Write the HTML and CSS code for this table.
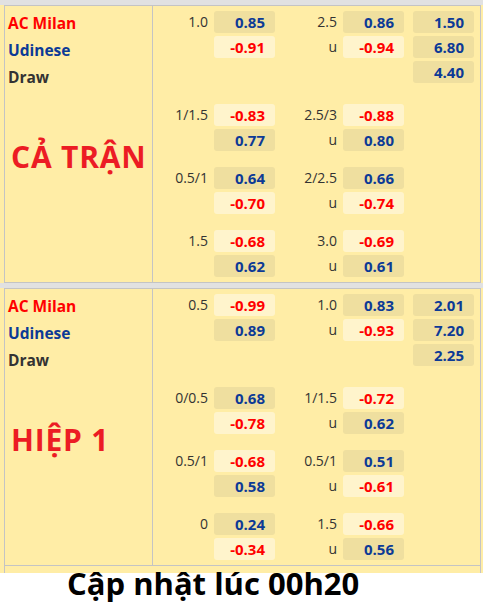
FILE: index.html
```html
<!DOCTYPE html>
<html lang="vi">
<head>
<meta charset="utf-8">
<link rel="stylesheet" href="styles.css">
</head>
<body>
<div class="board">
  <div class="band"></div>
  <section class="block">
    <div class="names">
      <div class="team home">AC Milan</div>
      <div class="team away">Udinese</div>
      <div class="team draw">Draw</div>
      <div class="big">CẢ TRẬN</div>
    </div>
    <div class="odds">
      <div class="group main">
        <div class="row"><div class="lbl">1.0</div><div class="v pos">0.85</div><div class="lbl">2.5</div><div class="v pos">0.86</div><div class="v pos x">1.50</div></div>
        <div class="row"><div class="lbl"></div><div class="v neg">-0.91</div><div class="lbl">u</div><div class="v neg">-0.94</div><div class="v pos x">6.80</div></div>
        <div class="row"><div class="lbl"></div><div></div><div class="lbl"></div><div></div><div class="v pos x">4.40</div></div>
      </div>
      <div class="group">
        <div class="row"><div class="lbl">1/1.5</div><div class="v neg">-0.83</div><div class="lbl">2.5/3</div><div class="v neg">-0.88</div></div>
        <div class="row"><div class="lbl"></div><div class="v pos">0.77</div><div class="lbl">u</div><div class="v pos">0.80</div></div>
      </div>
      <div class="group">
        <div class="row"><div class="lbl">0.5/1</div><div class="v pos">0.64</div><div class="lbl">2/2.5</div><div class="v pos">0.66</div></div>
        <div class="row"><div class="lbl"></div><div class="v neg">-0.70</div><div class="lbl">u</div><div class="v neg">-0.74</div></div>
      </div>
      <div class="group">
        <div class="row"><div class="lbl">1.5</div><div class="v neg">-0.68</div><div class="lbl">3.0</div><div class="v neg">-0.69</div></div>
        <div class="row"><div class="lbl"></div><div class="v pos">0.62</div><div class="lbl">u</div><div class="v pos">0.61</div></div>
      </div>
    </div>
  </section>
  <div class="band"></div>
  <section class="block">
    <div class="names">
      <div class="team home">AC Milan</div>
      <div class="team away">Udinese</div>
      <div class="team draw">Draw</div>
      <div class="big">HIỆP 1</div>
    </div>
    <div class="odds">
      <div class="group main">
        <div class="row"><div class="lbl">0.5</div><div class="v neg">-0.99</div><div class="lbl">1.0</div><div class="v pos">0.83</div><div class="v pos x">2.01</div></div>
        <div class="row"><div class="lbl"></div><div class="v pos">0.89</div><div class="lbl">u</div><div class="v neg">-0.93</div><div class="v pos x">7.20</div></div>
        <div class="row"><div class="lbl"></div><div></div><div class="lbl"></div><div></div><div class="v pos x">2.25</div></div>
      </div>
      <div class="group">
        <div class="row"><div class="lbl">0/0.5</div><div class="v pos">0.68</div><div class="lbl">1/1.5</div><div class="v neg">-0.72</div></div>
        <div class="row"><div class="lbl"></div><div class="v neg">-0.78</div><div class="lbl">u</div><div class="v pos">0.62</div></div>
      </div>
      <div class="group">
        <div class="row"><div class="lbl">0.5/1</div><div class="v neg">-0.68</div><div class="lbl">0.5/1</div><div class="v pos">0.51</div></div>
        <div class="row"><div class="lbl"></div><div class="v pos">0.58</div><div class="lbl">u</div><div class="v neg">-0.61</div></div>
      </div>
      <div class="group">
        <div class="row"><div class="lbl">0</div><div class="v pos">0.24</div><div class="lbl">1.5</div><div class="v neg">-0.66</div></div>
        <div class="row"><div class="lbl"></div><div class="v neg">-0.34</div><div class="lbl">u</div><div class="v pos">0.56</div></div>
      </div>
    </div>
  </section>
  <div class="tail"></div>
</div>
<div class="footer">Cập nhật lúc 00h20</div>
</body>
</html>
```
FILE: styles.css
```css
* { box-sizing: border-box; }
body {
  margin: 0;
  background: #fff;
  font-family: "Open Sans", "Noto Sans", sans-serif;
}
.board { background: #ffeda6; }
.band { height: 5px; background: #e1e1e1; }
.block {
  display: flex;
  margin-left: 4px;
  width: 477px;
  border: 1px solid #c4c4c4;
}
.names {
  width: 148px;
  border-right: 1px solid #c4c4c4;
  padding: 4px 0 0 3px;
}
.team {
  font-weight: 700;
  font-size: 15.5px;
  line-height: 27px;
}
.home { color: #ff0000; }
.away { color: #0c3a96; }
.draw { color: #333; }
.big {
  margin-top: 46px;
  padding-left: 3px;
  font-size: 30px;
  font-weight: 700;
  letter-spacing: 0.8px;
  line-height: 40px;
  color: #ec1c24;
}
.odds {
  flex: 1;
  padding: 5px 0 5px 0;
  display: flex;
  flex-direction: column;
}
.group { display: flex; flex-direction: column; gap: 3px; }
.group + .group { margin-top: 16px; }
.group.main { margin-bottom: 5px; }
.row {
  display: grid;
  grid-template-columns: 61px 61px 68px 61px 70px;
  height: 22px;
}
.lbl {
  text-align: right;
  padding-right: 6px;
  font-size: 14px;
  line-height: 22px;
  color: #333;
}
.v {
  border-radius: 3px;
  text-align: right;
  padding-right: 10px;
  font-weight: 700;
  font-size: 15px;
  line-height: 22px;
}
.v.pos { background: #efdf9f; color: #0c3a96; }
.v.neg { background: #fff4cc; color: #ff0000; }
.v.x { margin-left: 9px; }
.tail {
  height: 7px;
  margin-left: 4px;
  width: 477px;
  border-left: 1px solid #c4c4c4;
  border-right: 1px solid #c4c4c4;
}
.footer {
  padding-left: 67px;
  font-size: 31px;
  font-weight: 700;
  line-height: 20px;
  height: 40px;
  color: #000;
}
```
